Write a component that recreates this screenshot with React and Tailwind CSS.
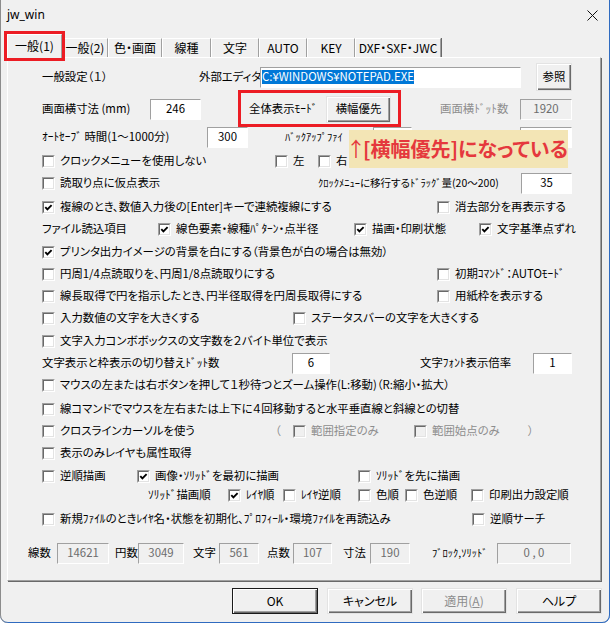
import React from 'react';

function Check({ checked, disabled, label, className = '' }) {
  return (
    <div className={`flex items-center shrink-0 ${className}`}>
      <span className="w-[13px] h-[13px] shrink-0 border border-t-[#a0a0a0] border-l-[#a0a0a0] border-r-white border-b-white">
        <span
          className={`flex items-center justify-center w-full h-full border border-t-[#696969] border-l-[#696969] border-r-[#e3e3e3] border-b-[#e3e3e3] ${
            disabled ? 'bg-[#f0f0f0]' : 'bg-white'
          }`}
        >
          {checked && (
            <svg width="9" height="9" viewBox="0 0 9 9">
              <path d="M1.3 4.2 L3.4 6.4 L7.6 2.2" stroke="#000" strokeWidth="1.9" fill="none" />
            </svg>
          )}
        </span>
      </span>
      {label && (
        <span className={`ml-[5px] whitespace-nowrap ${disabled ? 'text-[#8d8d8d]' : ''}`}>{label}</span>
      )}
    </div>
  );
}

function Field({ disabled, className = '', children }) {
  return (
    <div
      className={`flex items-center justify-center shrink-0 border border-t-[#a0a0a0] border-l-[#a0a0a0] border-r-white border-b-white ${
        disabled ? 'bg-[#f0f0f0] text-[#6d6d6d]' : 'bg-white'
      } ${className}`}
    >
      {children}
    </div>
  );
}

function Btn({ className = '', isDefault, disabled, children }) {
  return (
    <div
      className={`flex items-center justify-center shrink-0 bg-[#f0f0f0] shadow-[inset_1px_1px_0_#fff,inset_-1px_-1px_0_#696969,inset_-2px_-2px_0_#a0a0a0] ${
        isDefault ? 'border border-[#1a1a1a]' : 'border border-[#e3e3e3]'
      } ${disabled ? 'text-[#8d8d8d]' : ''} ${className}`}
    >
      {children}
    </div>
  );
}

const tabs = [
  { label: '一般(2)', w: 'w-[46px]' },
  { label: '色・画面', w: 'w-[54px]' },
  { label: '線種', w: 'w-[49px]' },
  { label: '文字', w: 'w-[48px]' },
  { label: 'AUTO', w: 'w-[48px]' },
  { label: 'KEY', w: 'w-[48px]' },
  { label: 'DXF・SXF・JWC', w: 'w-[86px]' },
];

export default function App() {
  return (
    <div className="relative w-[610px] h-[623px] overflow-hidden rounded-b-[8px] bg-[#f0f0f0] text-[11.4px] leading-none whitespace-nowrap text-black font-['Noto_Sans_CJK_JP',sans-serif] [font-feature-settings:'palt'] shadow-[inset_1px_0_0_#8c8c8c,inset_-1px_0_0_#2f6bc0,inset_0_-1px_0_#2f6bc0]">
      {/* title bar */}
      <div className="flex items-center justify-between h-[30px] pl-[7px] pr-[12px]">
        <span className="font-['Noto_Sans',sans-serif] text-[12px]">jw_win</span>
        <svg width="11" height="11" viewBox="0 0 11 11">
          <path d="M0.5 0.5 L10.5 10.5 M10.5 0.5 L0.5 10.5" stroke="#111" strokeWidth="1" />
        </svg>
      </div>

      {/* tabs */}
      <div className="flex items-end h-[27px] pl-[7px] text-[12px]">
        <div className="relative z-10 -mb-px flex items-center justify-center w-[55px] h-[24px] pb-[2px] bg-[#f0f0f0] border-t border-l border-white border-r border-r-[#a0a0a0] shadow-[1px_0_0_#696969]">
          一般(1)
        </div>
        {tabs.map((t) => (
          <div
            key={t.label}
            className={`flex items-center justify-center h-[19px] ${t.w} border-t border-l border-white border-r border-r-[#a0a0a0] shadow-[1px_0_0_#696969]`}
          >
            {t.label}
          </div>
        ))}
      </div>

      {/* panel */}
      <div className="ml-[7px] w-[594px] h-[524px] border border-t-white border-l-white border-r-[#a0a0a0] border-b-[#a0a0a0] shadow-[1px_1px_0_#696969] pl-[34px]">
        <div className="flex items-center h-[38px]">
          <div className="w-[157px] shrink-0">一般設定（１）</div>
          <div className="w-[61px] shrink-0">外部エディタ</div>
          <Field className="w-[261px] h-[21px] !justify-start pl-[1px]">
            <span className="bg-[#0078d7] text-white py-[1px]">C:¥WINDOWS¥NOTEPAD.EXE</span>
          </Field>
          <Btn className="ml-[15px] w-[36px] h-[28px]">参照</Btn>
        </div>

        <div className="flex items-center h-[26px]">
          <div className="w-[108px] shrink-0">画面横寸法 (mm)</div>
          <Field className="w-[51px] h-[21px]">246</Field>
          <div className="w-[48px] shrink-0" />
          <div className="w-[77px] shrink-0">全体表示ﾓｰﾄﾞ</div>
          <Btn className="w-[65px] h-[27px]">横幅優先</Btn>
          <div className="w-[49px] shrink-0" />
          <div className="w-[80px] shrink-0 text-[#8d8d8d]">画面横ﾄﾞｯﾄ数</div>
          <Field disabled className="w-[52px] h-[21px]">1920</Field>
        </div>

        <div className="flex items-center h-[30px]">
          <div className="w-[165px] shrink-0">ｵｰﾄｾｰﾌﾞ 時間(1〜1000分)</div>
          <Field className="w-[41px] h-[21px]">300</Field>
          <div className="w-[37px] shrink-0" />
          <div className="w-[88px] shrink-0 text-[10.5px]">ﾊﾞｯｸｱｯﾌﾟﾌｧｲ</div>
          <Field className="w-[39px] h-[21px]" />
          <div className="w-[108px] shrink-0" />
          <Field className="w-[52px] h-[21px]" />
        </div>

        <div className="flex items-center h-[18px]">
          <Check label="クロックメニューを使用しない" className="w-[233px]" />
          <Check label="左" className="w-[43px]" />
          <Check label="右" />
        </div>

        <div className="flex items-center h-[26px]">
          <Check label="読取り点に仮点表示" className="w-[276px]" />
          <div className="w-[203px] shrink-0 text-[10.5px]">ｸﾛｯｸﾒﾆｭｰに移行するﾄﾞﾗｯｸﾞ量(20〜200)</div>
          <Field className="w-[51px] h-[21px]">35</Field>
        </div>

        <div className="flex items-center h-[22px]">
          <Check checked label="複線のとき、数値入力後の[Enter]キーで連続複線にする" className="w-[395px]" />
          <Check label="消去部分を再表示する" />
        </div>

        <div className="flex items-center h-[22px]">
          <div className="w-[116px] shrink-0">ファイル読込項目</div>
          <Check checked label="線色要素・線種ﾊﾟﾀｰﾝ・点半径" className="w-[196px]" />
          <Check checked label="描画・印刷状態" className="w-[125px]" />
          <Check checked label="文字基準点ずれ" />
        </div>

        <div className="flex items-center h-[24px]">
          <Check checked label="プリンタ出力イメージの背景を白にする（背景色が白の場合は無効）" />
        </div>

        <div className="flex items-center h-[20px]">
          <Check label="円周1/4点読取りを、円周1/8点読取りにする" className="w-[395px]" />
          <Check label="初期ｺﾏﾝﾄﾞ：AUTOﾓｰﾄﾞ" />
        </div>

        <div className="flex items-center h-[24px]">
          <Check label="線長取得で円を指示したとき、円半径取得を円周長取得にする" className="w-[395px]" />
          <Check label="用紙枠を表示する" />
        </div>

        <div className="flex items-center h-[20px]">
          <Check label="入力数値の文字を大きくする" className="w-[251px]" />
          <Check label="ステータスバーの文字を大きくする" />
        </div>

        <div className="flex items-center h-[26px]">
          <Check label="文字入力コンボボックスの文字数を２バイト単位で表示" />
        </div>

        <div className="flex items-center h-[18px]">
          <div className="w-[250px] shrink-0">文字表示と枠表示の切り替えﾄﾞｯﾄ数</div>
          <Field className="w-[38px] h-[21px]">6</Field>
          <div className="w-[90px] shrink-0" />
          <div className="w-[113px] shrink-0">文字ﾌｫﾝﾄ表示倍率</div>
          <Field className="w-[39px] h-[21px]">1</Field>
        </div>

        <div className="flex items-center h-[26px]">
          <Check label="マウスの左または右ボタンを押して１秒待つとズーム操作(L:移動)（R:縮小・拡大）" />
        </div>

        <div className="flex items-center h-[22px]">
          <Check label="線コマンドでマウスを左右または上下に４回移動すると水平垂直線と斜線との切替" />
        </div>

        <div className="flex items-center h-[22px]">
          <Check label="クロスラインカーソルを使う" className="w-[233px]" />
          <div className="w-[18px] shrink-0 text-[#8d8d8d]">（</div>
          <Check disabled label="範囲指定のみ" className="w-[121px]" />
          <Check disabled label="範囲始点のみ" className="w-[114px]" />
          <div className="text-[#8d8d8d]">）</div>
        </div>

        <div className="flex items-center h-[22px]">
          <Check label="表示のみレイヤも属性取得" />
        </div>

        <div className="flex items-center h-[24px]">
          <Check label="逆順描画" className="w-[95px]" />
          <Check checked label="画像・ｿﾘｯﾄﾞを最初に描画" className="w-[221px]" />
          <Check label="ｿﾘｯﾄﾞを先に描画" />
        </div>

        <div className="flex items-center h-[14px]">
          <div className="w-[106px] shrink-0" />
          <div className="w-[80px] shrink-0">ｿﾘｯﾄﾞ描画順</div>
          <Check checked label="ﾚｲﾔ順" className="w-[55px]" />
          <Check label="ﾚｲﾔ逆順" className="w-[75px]" />
          <Check label="色順" className="w-[47px]" />
          <Check label="色逆順" className="w-[66px]" />
          <Check label="印刷出力設定順" />
        </div>

        <div className="flex items-center h-[34px]">
          <Check label="新規ﾌｧｲﾙのときﾚｲﾔ名・状態を初期化、ﾌﾟﾛﾌｨｰﾙ・環境ﾌｧｲﾙを再読込み" className="w-[430px]" />
          <Check label="逆順サーチ" />
        </div>

        <div className="flex items-center h-[34px] -ml-[14px]">
          <div className="w-[29px] shrink-0">線数</div>
          <Field disabled className="w-[52px] h-[21px]">14621</Field>
          <div className="w-[29px] shrink-0 pl-[6px]">円数</div>
          <Field disabled className="w-[46px] h-[21px]">3049</Field>
          <div className="w-[35px] shrink-0 pl-[9px]">文字</div>
          <Field disabled className="w-[40px] h-[21px]">561</Field>
          <div className="w-[34px] shrink-0 pl-[8px]">点数</div>
          <Field disabled className="w-[39px] h-[21px]">107</Field>
          <div className="w-[38px] shrink-0 pl-[11px]">寸法</div>
          <Field disabled className="w-[40px] h-[21px]">190</Field>
          <div className="w-[87px] shrink-0 pl-[22px] text-[10.5px]">ﾌﾞﾛｯｸ,ｿﾘｯﾄﾞ</div>
          <Field disabled className="w-[74px] h-[21px]">0 , 0</Field>
        </div>
      </div>

      {/* dialog buttons */}
      <div className="flex mt-[7px] pl-[232px] text-[12px]">
        <Btn isDefault className="w-[86px] h-[26px]">OK</Btn>
        <Btn className="ml-[9px] w-[86px] h-[26px]">キャンセル</Btn>
        <Btn disabled className="ml-[8px] w-[86px] h-[26px]">
          適用(<span className="underline">A</span>)
        </Btn>
        <Btn className="ml-[9px] w-[86px] h-[26px]">ヘルプ</Btn>
      </div>

      {/* red highlight frames and note */}
      <div className="absolute left-[4px] top-[31px] w-[61px] h-[30px] border-[3px] border-[#ec1c24] z-20" />
      <div className="absolute left-[238px] top-[90px] w-[163px] h-[37px] border-[3px] border-[#ec1c24] z-20" />
      <div className="absolute left-[349px] top-[130px] w-[219px] h-[38px] bg-[#f3e5b5] flex items-center justify-center z-20 text-[20px] font-bold text-[#e5383d]">
        <span className="font-normal -mx-[3px]">↑</span>[横幅優先]になっている
      </div>
    </div>
  );
}
